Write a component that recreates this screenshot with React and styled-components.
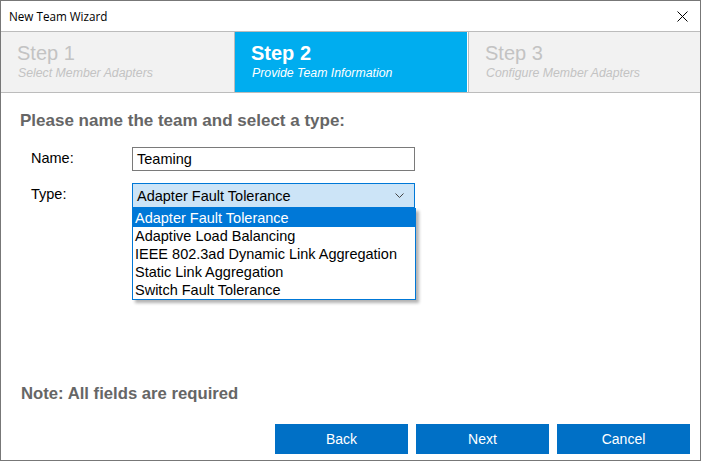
import React from 'react';
import styled, { createGlobalStyle } from 'styled-components';

const Global = createGlobalStyle`
  html, body { margin: 0; padding: 0; background: #fff; }
  body { font-family: "Liberation Sans", Arial, sans-serif; }
`;

const Window = styled.div`
  box-sizing: border-box;
  width: 701px;
  height: 461px;
  border: 1px solid #777;
  display: flex;
  flex-direction: column;
  background: #fff;
  position: relative;
`;

const TitleBar = styled.div`
  height: 30px;
  display: flex;
  align-items: center;
  justify-content: space-between;
  padding: 0 12px 0 8px;
  font-family: "Open Sans", "Noto Sans", sans-serif;
  font-size: 11.7px;
  color: #000;
`;

const Close = styled.svg`
  width: 11px;
  height: 11px;
`;

const Steps = styled.div`
  display: flex;
  height: 60px;
  border-top: 1px solid #bcbcbc;
  border-bottom: 1px solid #bcbcbc;
`;

const Step = styled.div`
  box-sizing: border-box;
  width: ${(p) => p.w}px;
  margin-left: ${(p) => p.gap || 0}px;
  padding: 9px 0 0 16px;
  background: ${(p) => (p.active ? '#00adef' : '#f2f2f2')};
  border-left: ${(p) => (p.bl ? '1px solid #bcbcbc' : 'none')};
  border-right: ${(p) => (p.br ? '1px solid #bcbcbc' : 'none')};
  color: ${(p) => (p.active ? '#fff' : '#c3c3c3')};
`;

const StepTitle = styled.div`
  font-size: 20px;
  line-height: 24px;
  font-weight: ${(p) => (p.active ? 700 : 400)};
`;

const StepSub = styled.div`
  font-size: 12.3px;
  font-style: italic;
  line-height: 16px;
  padding-left: 1px;
`;

const Body = styled.div`
  flex: 1;
  display: flex;
  flex-direction: column;
  padding: 18px 10px 6px 18px;
`;

const Heading = styled.div`
  font-size: 17px;
  font-weight: 700;
  color: #666;
  line-height: 20px;
  padding-left: 1px;
`;

const Form = styled.div`
  display: grid;
  grid-template-columns: 101px 283px;
  row-gap: 12px;
  margin: 16px 0 0 12px;
  font-size: 14.5px;
  color: #000;
`;

const Label = styled.div`
  padding-top: ${(p) => p.pt}px;
  line-height: 16px;
`;

const Input = styled.div`
  box-sizing: border-box;
  height: 24px;
  border: 1px solid #7a7a7a;
  padding: 0 4px;
  display: flex;
  align-items: center;
`;

const SelectWrap = styled.div`
  position: relative;
`;

const Select = styled.div`
  box-sizing: border-box;
  height: 25px;
  border: 1px solid #0078d7;
  background: #cce4f7;
  padding: 0 10px 0 4px;
  display: flex;
  align-items: center;
  justify-content: space-between;
`;

const List = styled.div`
  position: absolute;
  left: 0;
  top: 25px;
  width: 284px;
  box-sizing: border-box;
  border: 1px solid #0078d7;
  background: #fff;
  box-shadow: 3px 3px 3px rgba(0, 0, 0, 0.3);
  z-index: 2;
`;

const Option = styled.div`
  height: 18px;
  line-height: 18px;
  padding-left: 2px;
  background: ${(p) => (p.selected ? '#0078d7' : 'transparent')};
  color: ${(p) => (p.selected ? '#fff' : '#000')};
`;

const Note = styled.div`
  margin-top: auto;
  padding-left: 2px;
  font-size: 16.7px;
  font-weight: 700;
  color: #666;
  line-height: 20px;
`;

const Buttons = styled.div`
  display: flex;
  justify-content: flex-end;
  gap: 8px;
  margin-top: 20px;
`;

const Button = styled.button`
  width: 133px;
  height: 30px;
  border: none;
  background: #0070c6;
  color: #fff;
  font-family: "Liberation Sans", Arial, sans-serif;
  font-size: 14px;
  padding: 0;
`;

const options = [
  'Adapter Fault Tolerance',
  'Adaptive Load Balancing',
  'IEEE 802.3ad Dynamic Link Aggregation',
  'Static Link Aggregation',
  'Switch Fault Tolerance',
];

export default function App() {
  return (
    <>
      <Global />
      <Window>
        <TitleBar>
          <span>New Team Wizard</span>
          <Close viewBox="0 0 11 11">
            <path d="M0.5 0.5 L10.5 10.5 M10.5 0.5 L0.5 10.5" stroke="#000" strokeWidth="1" fill="none" />
          </Close>
        </TitleBar>
        <Steps>
          <Step w={234} br>
            <StepTitle>Step 1</StepTitle>
            <StepSub>Select Member Adapters</StepSub>
          </Step>
          <Step w={232} active>
            <StepTitle active>Step 2</StepTitle>
            <StepSub>Provide Team Information</StepSub>
          </Step>
          <Step w={232} gap={1} bl>
            <StepTitle>Step 3</StepTitle>
            <StepSub>Configure Member Adapters</StepSub>
          </Step>
        </Steps>
        <Body>
          <Heading>Please name the team and select a type:</Heading>
          <Form>
            <Label pt={3}>Name:</Label>
            <Input>Teaming</Input>
            <Label pt={3}>Type:</Label>
            <SelectWrap>
              <Select>
                <span>Adapter Fault Tolerance</span>
                <svg width="9" height="5" viewBox="0 0 9 5">
                  <path d="M0.5 0.5 L4.5 4.5 L8.5 0.5" stroke="#444" strokeWidth="1" fill="none" />
                </svg>
              </Select>
              <List>
                {options.map((o, i) => (
                  <Option key={o} selected={i === 0}>{o}</Option>
                ))}
              </List>
            </SelectWrap>
          </Form>
          <Note>Note: All fields are required</Note>
          <Buttons>
            <Button>Back</Button>
            <Button>Next</Button>
            <Button>Cancel</Button>
          </Buttons>
        </Body>
      </Window>
    </>
  );
}
